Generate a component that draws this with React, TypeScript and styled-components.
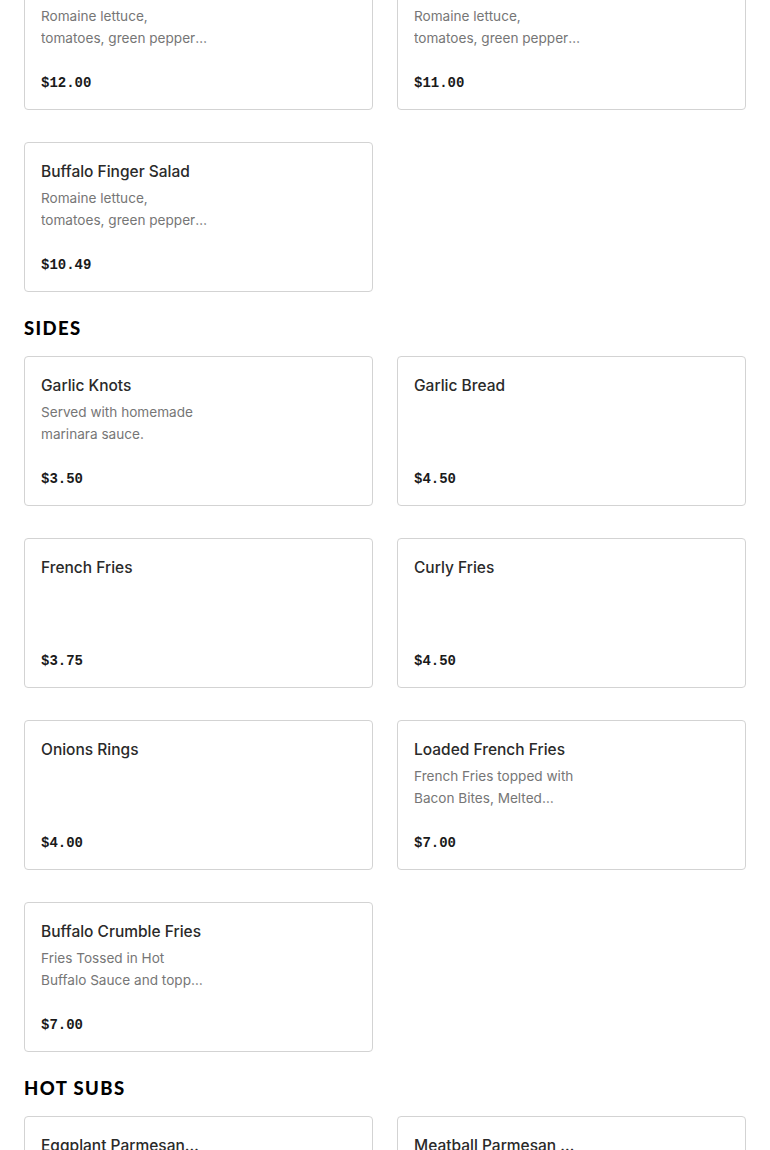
import React from "react";
import styled, { createGlobalStyle } from "styled-components";

const Global = createGlobalStyle`
  * { box-sizing: border-box; }
  html, body { margin: 0; padding: 0; background: #ffffff; }
  body { font-family: Inter, "Noto Sans", sans-serif; -webkit-font-smoothing: antialiased; }
`;

const Page = styled.main`
  margin-top: -40px;
  padding: 0 24px 40px;
  display: flex;
  flex-direction: column;
`;

const Section = styled.section<{ $first?: boolean }>`
  display: flex;
  flex-direction: column;
  padding-top: ${(p) => (p.$first ? 0 : 24)}px;
`;

const Heading = styled.h2`
  margin: 0 0 16px;
  font-family: Lato, "Noto Sans", sans-serif;
  font-weight: 900;
  font-size: 18.5px;
  line-height: 24px;
  letter-spacing: 1.4px;
  text-transform: uppercase;
  color: #000000;
`;

const Grid = styled.div`
  display: grid;
  grid-template-columns: 1fr 1fr;
  column-gap: 24px;
  row-gap: 32px;
`;

const Card = styled.article`
  height: 150px;
  border: 1px solid #d3d3d3;
  border-radius: 4px;
  padding: 18px 16px 15px;
  display: flex;
  flex-direction: column;
  background: #fff;
`;

const Title = styled.h3`
  margin: 0;
  width: 161px;
  font-size: 15.5px;
  font-weight: 500;
  line-height: 22px;
  color: #2a2a2a;
  white-space: nowrap;
  overflow: hidden;
  text-overflow: ellipsis;
`;

const Desc = styled.p`
  margin: 4px 0 0;
  width: 168px;
  font-size: 13.6px;
  line-height: 22px;
  color: #767676;
  display: -webkit-box;
  -webkit-line-clamp: 2;
  -webkit-box-orient: vertical;
  overflow: hidden;
`;

const Price = styled.span`
  margin-top: auto;
  font-family: "Liberation Mono", "DejaVu Sans Mono", monospace;
  font-weight: 700;
  font-size: 14px;
  line-height: 22px;
  color: #1a1a1a;
`;

type Item = { name: string; desc?: string; price: string };

const salads: Item[] = [
  { name: "Chef Salad", desc: "Romaine lettuce, tomatoes, green peppers, onions and cucumbers.", price: "$12.00" },
  { name: "Grilled Chicken Salad", desc: "Romaine lettuce, tomatoes, green peppers, onions and cucumbers.", price: "$11.00" },
  { name: "Buffalo Finger Salad", desc: "Romaine lettuce, tomatoes, green peppers, onions and cucumbers.", price: "$10.49" },
];

const sides: Item[] = [
  { name: "Garlic Knots", desc: "Served with homemade marinara sauce.", price: "$3.50" },
  { name: "Garlic Bread", price: "$4.50" },
  { name: "French Fries", price: "$3.75" },
  { name: "Curly Fries", price: "$4.50" },
  { name: "Onions Rings", price: "$4.00" },
  { name: "Loaded French Fries", desc: "French Fries topped with Bacon Bites, Melted Cheese and Ranch.", price: "$7.00" },
  { name: "Buffalo Crumble Fries", desc: "Fries Tossed in Hot Buffalo Sauce and topped with Blue Cheese Crumbles.", price: "$7.00" },
];

const hotSubs: Item[] = [
  { name: "Eggplant Parmesan Sub", desc: "Breaded eggplant, marinara sauce and melted mozzarella.", price: "$9.50" },
  { name: "Meatball Parmesan Sub", desc: "Homemade meatballs, marinara sauce and melted mozzarella.", price: "$9.50" },
];

const MenuCard = ({ item }: { item: Item }) => (
  <Card>
    <Title>{item.name}</Title>
    {item.desc && <Desc>{item.desc}</Desc>}
    <Price>{item.price}</Price>
  </Card>
);

const MenuSection = ({ title, items, first }: { title?: string; items: Item[]; first?: boolean }) => (
  <Section $first={first}>
    {title && <Heading>{title}</Heading>}
    <Grid>
      {items.map((it) => (
        <MenuCard key={it.name} item={it} />
      ))}
    </Grid>
  </Section>
);

export default function App() {
  return (
    <>
      <Global />
      <Page>
        <MenuSection items={salads} first />
        <MenuSection title="Sides" items={sides} />
        <MenuSection title="Hot Subs" items={hotSubs} />
      </Page>
    </>
  );
}
